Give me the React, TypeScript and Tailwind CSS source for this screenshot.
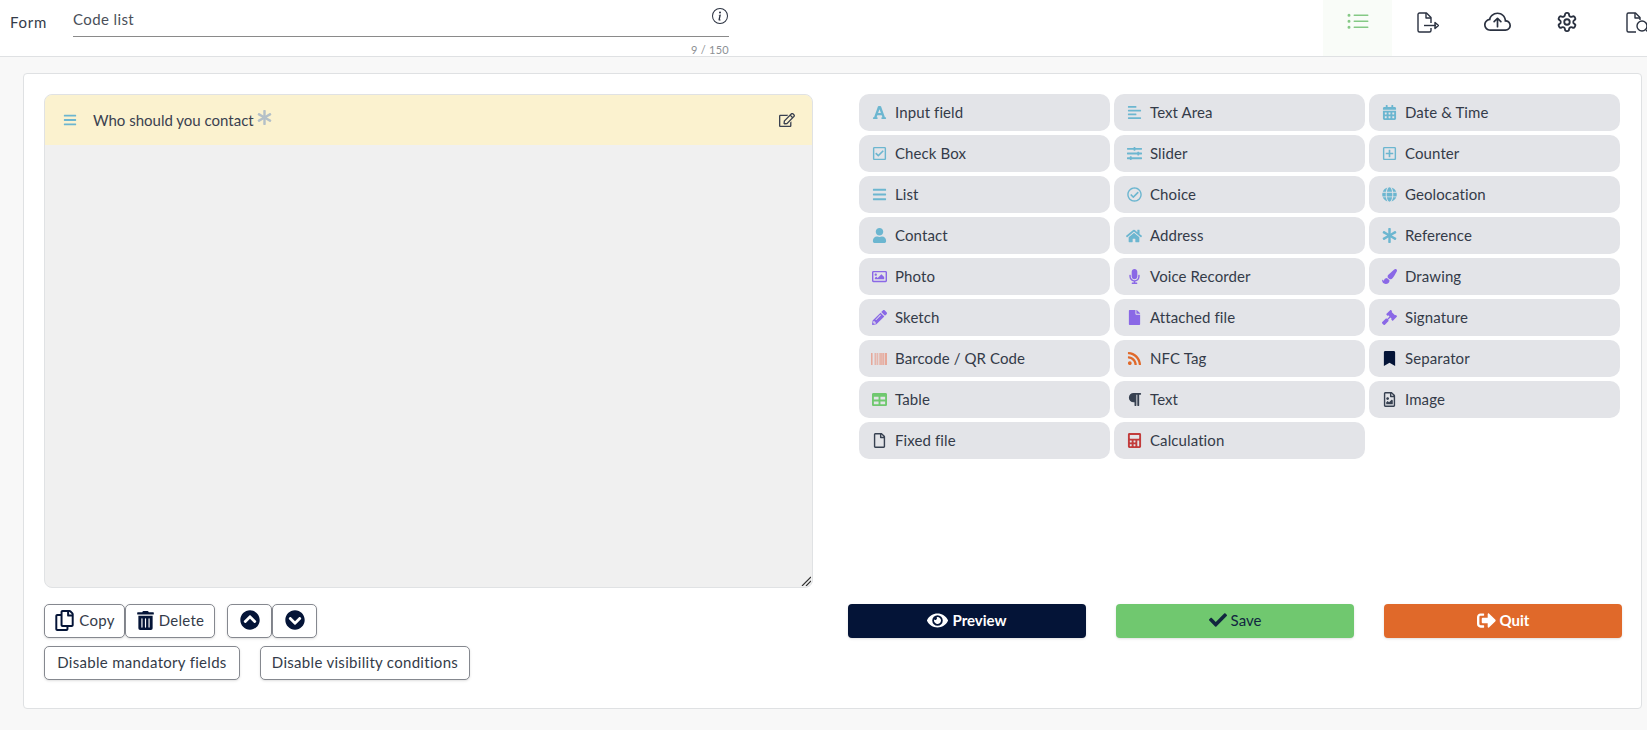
import type { ReactNode } from "react";
import {
  FaAlignLeft,
  FaAsterisk,
  FaBars,
  FaBarcode,
  FaBookmark,
  FaCalculator,
  FaCalendarAlt,
  FaCheck,
  FaChevronCircleDown,
  FaChevronCircleUp,
  FaEye,
  FaFile,
  FaFont,
  FaGavel,
  FaGlobe,
  FaHome,
  FaMicrophone,
  FaPaintBrush,
  FaParagraph,
  FaPencilAlt,
  FaRegCheckCircle,
  FaRegCheckSquare,
  FaRegCopy,
  FaRegEdit,
  FaRegFile,
  FaRegFileImage,
  FaRegImage,
  FaRegPlusSquare,
  FaRss,
  FaSignOutAlt,
  FaSlidersH,
  FaTable,
  FaTrashAlt,
  FaUser,
} from "react-icons/fa";
import { BsCloudArrowUp, BsInfoCircle, BsListUl } from "react-icons/bs";
import { LuSettings } from "react-icons/lu";

const blue = "text-[#6cb6d0]";
const purple = "text-[#8a68e6]";

const fields = [
  { label: "Input field", icon: <FaFont className={blue} /> },
  { label: "Text Area", icon: <FaAlignLeft className={blue} /> },
  { label: "Date & Time", icon: <FaCalendarAlt className={blue} /> },
  { label: "Check Box", icon: <FaRegCheckSquare className={blue} /> },
  { label: "Slider", icon: <FaSlidersH className={blue} /> },
  { label: "Counter", icon: <FaRegPlusSquare className={blue} /> },
  { label: "List", icon: <FaBars className={blue} /> },
  { label: "Choice", icon: <FaRegCheckCircle className={blue} /> },
  { label: "Geolocation", icon: <FaGlobe className={blue} /> },
  { label: "Contact", icon: <FaUser className={blue} /> },
  { label: "Address", icon: <FaHome className={`${blue} text-[16px]`} /> },
  { label: "Reference", icon: <FaAsterisk className={blue} /> },
  { label: "Photo", icon: <FaRegImage className={purple} /> },
  { label: "Voice Recorder", icon: <FaMicrophone className={purple} /> },
  { label: "Drawing", icon: <FaPaintBrush className={purple} /> },
  { label: "Sketch", icon: <FaPencilAlt className={purple} /> },
  { label: "Attached file", icon: <FaFile className={purple} /> },
  { label: "Signature", icon: <FaGavel className={purple} /> },
  { label: "Barcode / QR Code", icon: <FaBarcode className="text-[16px] text-[#e8907a]" /> },
  { label: "NFC Tag", icon: <FaRss className="text-[#e0692a]" /> },
  { label: "Separator", icon: <FaBookmark className="text-[#041437]" /> },
  { label: "Table", icon: <FaTable className="text-[#70c86f]" /> },
  { label: "Text", icon: <FaParagraph className="text-[#374151]" /> },
  { label: "Image", icon: <FaRegFileImage className="text-[#374151]" /> },
  { label: "Fixed file", icon: <FaRegFile className="text-[#374151]" /> },
  { label: "Calculation", icon: <FaCalculator className="text-[#c23b3b]" /> },
];

const FileExport = () => (
  <svg viewBox="0 0 24 24" className="h-6 w-6" fill="none" stroke="currentColor" strokeWidth="1.4" strokeLinejoin="round">
    <path d="M16 13V7.5L11.5 3H4.5A1.5 1.5 0 0 0 3 4.5v16A1.5 1.5 0 0 0 4.5 22H14.500A1.500 1.500 0 0 0 16 20.500V18" />
    <path d="M11 3v5h5" />
    <path d="M9 15.500h12" />
    <path d="M20 12.500l3.500 3-3.500 3z" />
  </svg>
);

const FileSearch = () => (
  <svg viewBox="0 0 24 24" className="h-6 w-6" fill="none" stroke="currentColor" strokeWidth="1.4" strokeLinejoin="round">
    <path d="M15 10V7.5L10.500 3H3.500A1.500 1.500 0 0 0 2 4.500v16A1.500 1.500 0 0 0 3.500 22H11" />
    <path d="M10 3v5h5" />
    <circle cx="17" cy="16" r="5" />
    <path d="M21 20l2.500 2.500" />
  </svg>
);

const OutlineButton = ({ children, className = "" }: { children: ReactNode; className?: string }) => (
  <button className={`flex h-[34px] items-center justify-center gap-1 rounded-[5px] border border-[#85888f] bg-white pb-[2px] text-[15px] tracking-[0.3px] text-[#343b49] shadow-sm ${className}`}>
    {children}
  </button>
);

const ActionButton = ({ children, className = "" }: { children: ReactNode; className?: string }) => (
  <button className={`flex h-[34px] w-[238px] items-center justify-center gap-1 rounded-[4px] pb-[2px] text-[15px] font-bold shadow-sm ${className}`}>
    {children}
  </button>
);

const App = () => {
  return (
    <div className="h-[730px] w-[1647px] overflow-hidden bg-[#f8f8f8] font-['Lato','Liberation_Sans',sans-serif] text-[#343b49]">
      <header className="flex h-[57px] border-b border-[#dfe1e3] bg-white">
        <div className="w-[73px] shrink-0 pl-[10px] pt-[11px] text-[15px] tracking-[0.7px]">Form</div>
        <div className="w-[656px] shrink-0">
          <div className="flex h-[37px] items-start justify-between border-b border-[#8a8a8a] pt-[8px] text-[15px] tracking-[0.4px] text-[#4a4f59]">
            <span>Code list</span>
            <BsInfoCircle className="mr-[1px] text-[16px] text-[#2a3140]" />
          </div>
          <div className="pt-[5px] text-right text-[11px] tracking-wide text-[#8c8f94]">9 / 150</div>
        </div>
        <nav className="ml-[594px] flex shrink-0 text-[#2a3140]">
          <div className="flex h-[56px] w-[69px] items-center justify-center bg-[#f9fcf8] pb-[12px] text-[#85c985]">
            <BsListUl className="text-[24px]" />
          </div>
          <div className="flex h-[56px] w-[70px] items-center justify-center pb-[12px]"><FileExport /></div>
          <div className="flex h-[56px] w-[70px] items-center justify-center pb-[12px]"><BsCloudArrowUp className="text-[27px]" /></div>
          <div className="flex h-[56px] w-[70px] items-center justify-center pb-[12px]"><LuSettings className="text-[22px]" /></div>
          <div className="flex h-[56px] w-[70px] shrink-0 items-center justify-center pb-[12px]"><FileSearch /></div>
        </nav>
      </header>

      <main className="mx-[23px] mt-[16px] flex h-[636px] w-[1619px] rounded-[4px] border border-[#dfe1e3] bg-white px-[20px] pt-[20px]">
        <section className="w-[769px] shrink-0">
          <div className="relative h-[494px] overflow-hidden rounded-lg border border-[#e0e2e4] bg-[#f0f0f0]">
            <div className="flex h-[50px] items-center bg-[#fbf2cf] pl-[18px] pr-[17px]">
              <FaBars className="text-[14px] text-[#6cb6d0]" />
              <span className="ml-[16px] text-[15px] text-[#3a4150]">Who should you contact</span>
              <FaAsterisk className="mb-[6px] ml-[3px] text-[15px] text-[#b4c0c8]" />
              <FaRegEdit className="ml-auto text-[16px] text-[#3a4150]" />
            </div>
            <svg viewBox="0 0 10 10" className="absolute bottom-[1px] right-[1px] h-[10px] w-[10px]" stroke="#333" strokeWidth="1.200">
              <path d="M1 10L10 1M5 10l5-5" />
            </svg>
          </div>
          <div className="mt-[16px] flex">
            <OutlineButton className="w-[81px]"><FaRegCopy className="text-[21px] text-[#041437]" />Copy</OutlineButton>
            <OutlineButton className="w-[90px]"><FaTrashAlt className="text-[19px] text-[#041437]" />Delete</OutlineButton>
            <OutlineButton className="ml-[12px] w-[45px]"><FaChevronCircleUp className="text-[20px] text-[#041437]" /></OutlineButton>
            <OutlineButton className="w-[45px]"><FaChevronCircleDown className="text-[20px] text-[#041437]" /></OutlineButton>
          </div>
          <div className="mt-[8px] flex gap-[20px]">
            <OutlineButton className="w-[196px]">Disable mandatory fields</OutlineButton>
            <OutlineButton className="w-[210px]">Disable visibility conditions</OutlineButton>
          </div>
        </section>

        <section className="ml-[35px] w-[774px] shrink-0">
          <div className="h-[493px] pl-[11px]">
            <div className="grid w-[761px] grid-cols-3 gap-[4px]">
              {fields.map((field) => (
                <div key={field.label} className="flex h-[37px] items-center gap-[8px] rounded-[10px] bg-[#e3e4e8] px-[12px] text-[15px] tracking-[0.1px] text-[#343b49]">
                  <span className="flex w-[16px] justify-center text-[15px]">{field.icon}</span>
                  {field.label}
                </div>
              ))}
            </div>
          </div>
          <div className="mt-[17px] flex justify-between">
            <ActionButton className="bg-[#041437] text-white"><FaEye className="text-[21px]" />Preview</ActionButton>
            <ActionButton className="bg-[#70c86f] font-normal text-[#12263f]"><FaCheck className="text-[18px]" />Save</ActionButton>
            <ActionButton className="bg-[#e0692a] text-white"><FaSignOutAlt className="text-[19px]" />Quit</ActionButton>
          </div>
        </section>
      </main>
    </div>
  );
};

export default App;
